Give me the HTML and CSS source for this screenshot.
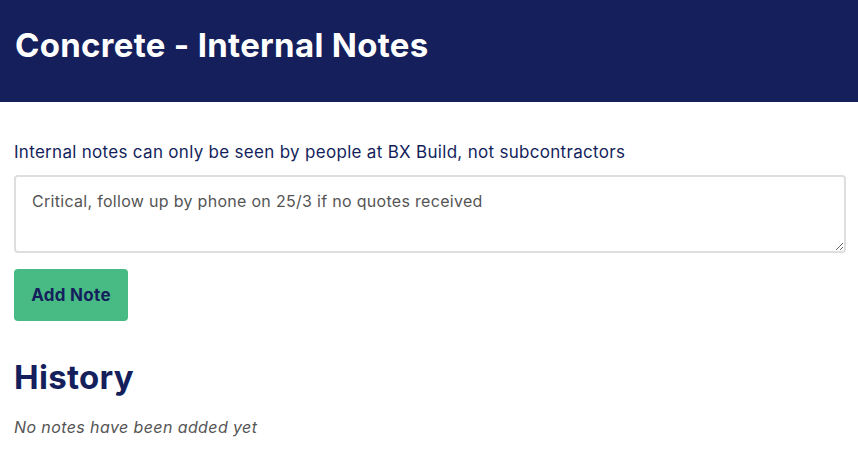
FILE: index.html
```html
<!DOCTYPE html>
<html lang="en">
<head>
    <meta charset="UTF-8">
    <meta name="viewport" content="width=device-width, initial-scale=1.0">
    <title>Concrete - Internal Notes</title>
    <link rel="stylesheet" href="styles.css">
</head>
<body>
    <header class="page-header">
        <h1>Concrete - Internal Notes</h1>
    </header>

    <main class="notes">
        <p class="notes-hint">Internal notes can only be seen by people at BX Build, not subcontractors</p>
        <textarea class="notes-input" rows="2">Critical, follow up by phone on 25/3 if no quotes received</textarea>
        <button class="add-btn">Add Note</button>

        <h2 class="history-title">History</h2>
        <p class="history-empty">No notes have been added yet</p>
    </main>
</body>
</html>
```

FILE: styles.css
```css
body {
    font-family: Inter, "Noto Sans", sans-serif;
    margin: 0;
    background-color: #fff;
    color: #141f5c;
    letter-spacing: 0.3px;
}

.page-header {
    box-sizing: border-box;
    background-color: #141f5c;
    height: 102px;
    padding: 25px 15px 0;
}

.page-header h1 {
    margin: 0;
    color: #fff;
    font-size: 33px;
    font-weight: 700;
    line-height: 40px;
}

.notes {
    padding: 40px 12px 0 14px;
    display: flex;
    flex-direction: column;
    align-items: flex-start;
}

.notes-hint {
    margin: 0 0 12px;
    font-size: 17px;
    line-height: 21px;
}

.notes-input {
    box-sizing: border-box;
    width: 100%;
    height: 78px;
    border: 2px solid #dedede;
    border-radius: 4px;
    padding: 14px 16px;
    font-family: inherit;
    font-size: 16px;
    letter-spacing: 0.3px;
    color: #555;
    resize: vertical;
}

.add-btn {
    margin-top: 16px;
    width: 114px;
    height: 52px;
    border: none;
    border-radius: 4px;
    background-color: #48bb84;
    color: #141f5c;
    font-family: inherit;
    font-size: 17px;
    font-weight: 700;
    letter-spacing: 0.3px;
    cursor: pointer;
}

.history-title {
    margin: 36px 0 0;
    font-size: 33px;
    font-weight: 700;
    line-height: 40px;
}

.history-empty {
    margin: 20px 0 0;
    font-size: 16px;
    font-style: italic;
    letter-spacing: 0.4px;
    color: #555;
}
```
